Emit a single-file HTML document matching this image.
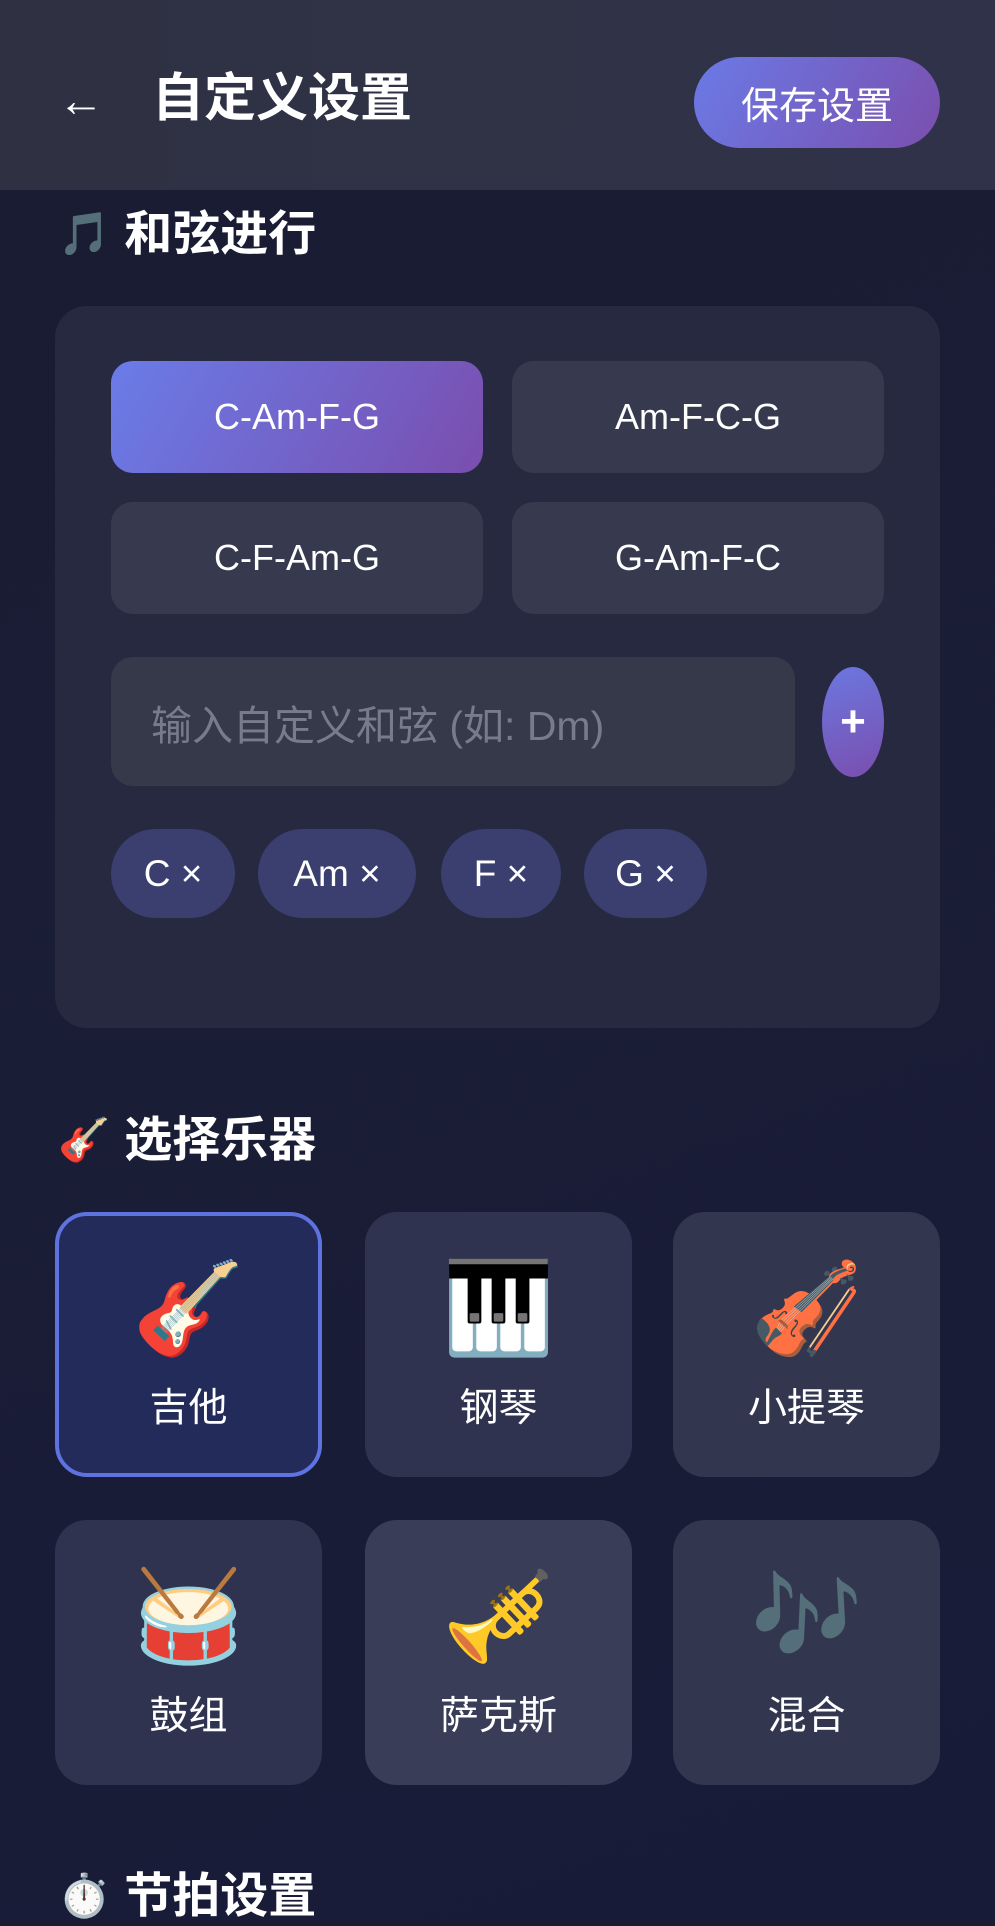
<!DOCTYPE html>
<html><head><meta charset="utf-8"><style>
*{margin:0;padding:0;box-sizing:border-box}
body{width:995px;height:1920px;overflow:hidden;background:linear-gradient(160deg,#1a1c33 0%,#1a1d36 50%,#171b38 100%);font-family:"Liberation Sans","Noto Sans CJK SC",sans-serif;color:#fff;position:relative}
.hdr{position:absolute;left:0;top:0;width:995px;height:190px;background:linear-gradient(90deg,#2f3142,#30324a)}
.abs{position:absolute}
.back{left:58px;top:72px;font-size:46px;color:#fff;line-height:56px}
.title{left:152px;top:66px;font-size:52px;font-weight:bold;line-height:66px}
.save{left:694px;top:57px;width:246px;height:91px;border-radius:46px;background:linear-gradient(120deg,#6b7ae6,#7a4fae);font-size:38px;display:flex;align-items:center;justify-content:center}
.sec{font-size:48px;font-weight:bold;line-height:58px;display:flex;align-items:center}
.sec .e{font-size:42px;margin-right:14px;font-family:"Noto Color Emoji","DejaVu Sans",sans-serif}
.card{left:55px;top:306px;width:885px;height:722px;border-radius:32px;background:#262940}
.chip{position:absolute;width:372px;height:112px;border-radius:22px;background:#373a4f;font-size:36px;display:flex;align-items:center;justify-content:center}
.chip.on{background:linear-gradient(120deg,#6a7ce8,#7a4eae)}
.inp{left:111px;top:657px;width:684px;height:129px;border-radius:22px;background:#363949;color:#787b8c;font-size:41px;padding-left:40px;display:flex;align-items:center}
.plus{left:822px;top:667px;width:62px;height:110px;border-radius:50%;background:linear-gradient(160deg,#6b78e0,#7a4eae);font-size:44px;display:flex;align-items:center;justify-content:center;font-weight:bold}
.tag{position:absolute;top:829px;height:89px;border-radius:45px;background:#3a3f70;font-size:37px;display:flex;align-items:center;justify-content:center}
.ins{position:absolute;width:267px;height:265px;border-radius:32px;background:#2f3350;text-align:center}
.ins .em{position:absolute;left:0;right:0;top:42px;font-size:90px;line-height:110px;font-family:"Noto Color Emoji","DejaVu Sans",sans-serif}
.ins .lb{position:absolute;left:0;right:0;top:172px;font-size:39px;line-height:50px}
.ins.sel{background:#232b5a;border:4px solid #5f73e0}
</style></head><body>
<div class="hdr"></div>
<div class="abs back">←</div>
<div class="abs title">自定义设置</div>
<div class="abs save">保存设置</div>

<div class="abs sec" style="left:58px;top:206px"><span class="e" style="color:#6f8290">🎵</span>和弦进行</div>
<div class="abs card"></div>
<div class="chip on" style="left:111px;top:361px">C-Am-F-G</div>
<div class="chip" style="left:512px;top:361px">Am-F-C-G</div>
<div class="chip" style="left:111px;top:502px">C-F-Am-G</div>
<div class="chip" style="left:512px;top:502px">G-Am-F-C</div>
<div class="abs inp">输入自定义和弦 (如: Dm)</div>
<div class="abs plus">+</div>
<div class="tag" style="left:111px;width:124px">C ×</div>
<div class="tag" style="left:258px;width:158px">Am ×</div>
<div class="tag" style="left:441px;width:120px">F ×</div>
<div class="tag" style="left:584px;width:123px">G ×</div>

<div class="abs sec" style="left:58px;top:1112px"><span class="e">🎸</span>选择乐器</div>
<div class="ins sel" style="left:55px;top:1212px"><div class="em" style="top:38px">🎸</div><div class="lb" style="top:168px">吉他</div></div>
<div class="ins" style="left:365px;top:1212px;background:#2f3350"><div class="em">🎹</div><div class="lb">钢琴</div></div>
<div class="ins" style="left:673px;top:1212px;background:#33364f"><div class="em">🎻</div><div class="lb">小提琴</div></div>
<div class="ins" style="left:55px;top:1520px;background:#2f3350"><div class="em">🥁</div><div class="lb">鼓组</div></div>
<div class="ins" style="left:365px;top:1520px;background:#393d58"><div class="em">🎺</div><div class="lb">萨克斯</div></div>
<div class="ins" style="left:673px;top:1520px;background:#33364f"><div class="em" style="color:#5c6f80">🎶</div><div class="lb">混合</div></div>

<div class="abs sec" style="left:58px;top:1868px"><span class="e">⏱️</span>节拍设置</div>
</body></html>
